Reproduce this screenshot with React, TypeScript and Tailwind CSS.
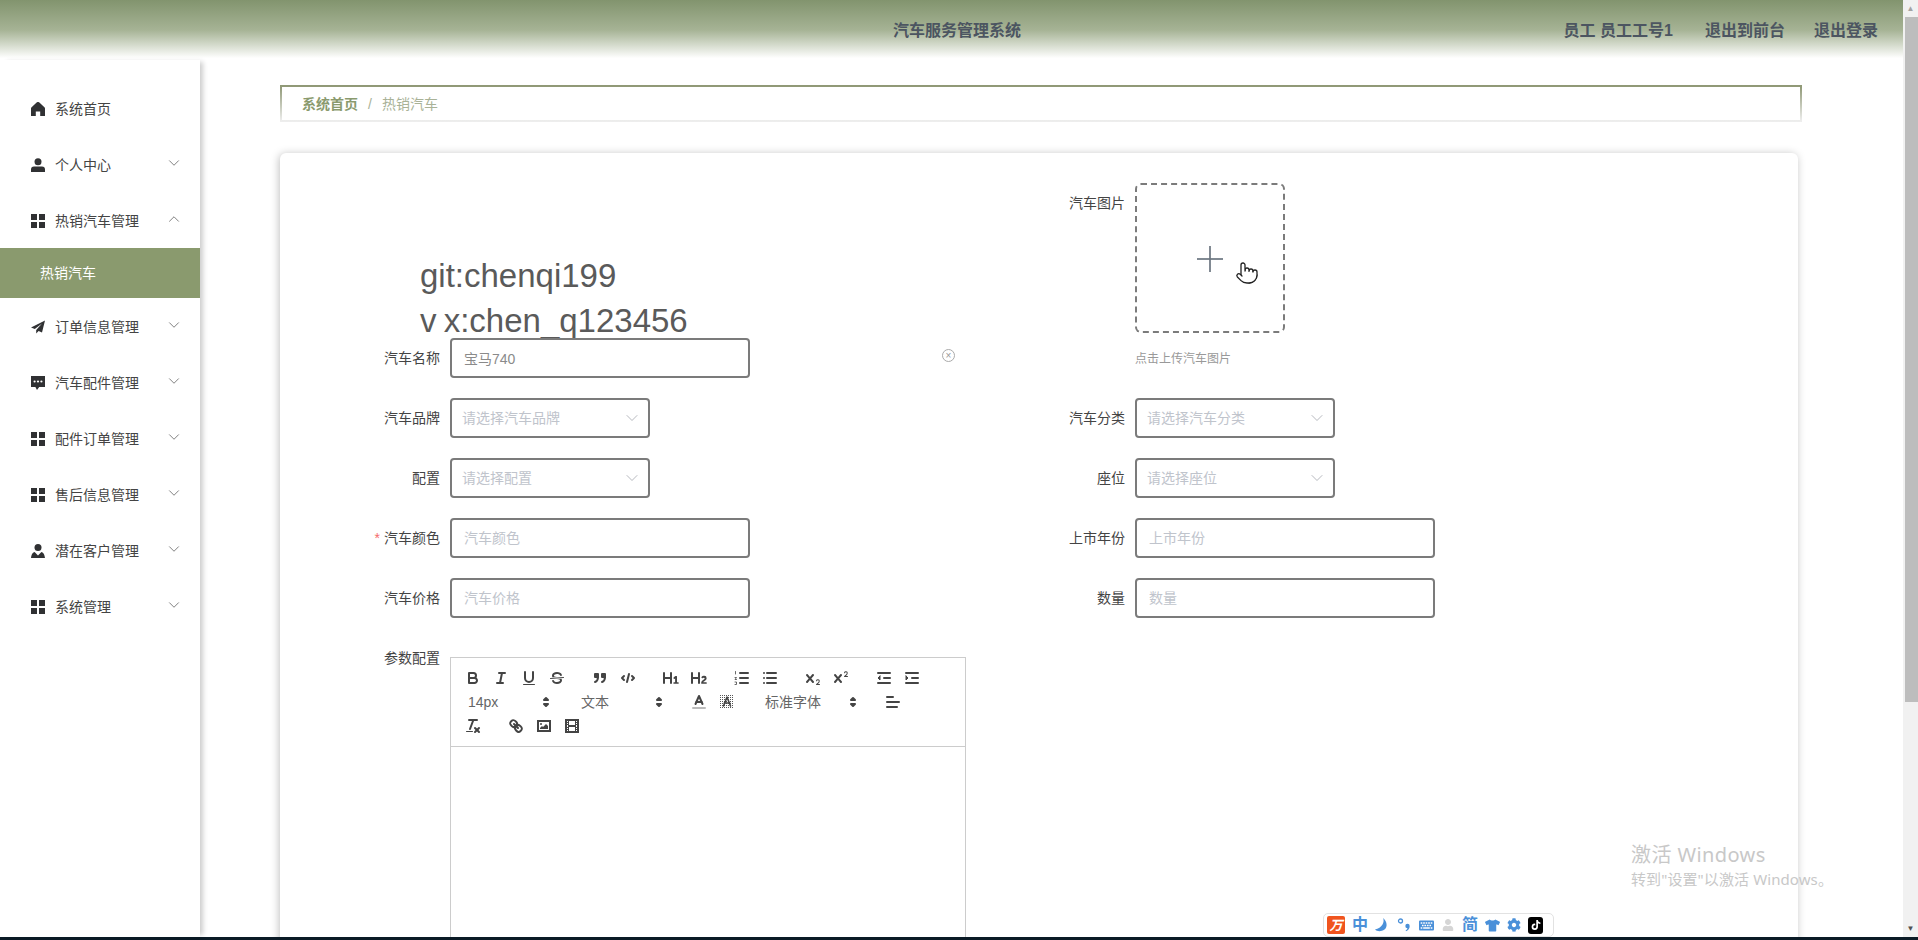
import type { ReactNode } from 'react';
import { ChevronDown, ChevronUp, Pointer } from 'lucide-react';
import { FaCog, FaKeyboard, FaTiktok, FaTshirt, FaUser } from 'react-icons/fa';

function HomeIcon() {
  return (
    <svg width="14" height="14" viewBox="0 0 14 14" fill="#303133">
      <path d="M5.6.6a2 2 0 0 1 2.8 0l5 4.6c.4.4.6.8.6 1.3V14H9.2V9.6H4.8V14H0V6.5c0-.5.2-.9.6-1.3z" />
    </svg>
  );
}

function UserIcon() {
  return (
    <svg width="14" height="14" viewBox="0 0 14 14" fill="#303133">
      <circle cx="7" cy="3.7" r="3.5" />
      <path d="M3 8.6h8a3 3 0 0 1 3 3V14H0v-2.4a3 3 0 0 1 3-3z" />
    </svg>
  );
}

function GridIcon() {
  return (
    <svg width="14" height="14" viewBox="0 0 14 14" fill="#303133">
      <rect x="0" y="0" width="6" height="6" />
      <rect x="8" y="0" width="6" height="6" />
      <rect x="0" y="8" width="6" height="6" />
      <rect x="8" y="8" width="6" height="6" />
    </svg>
  );
}

function PlaneIcon() {
  return (
    <svg width="14" height="14" viewBox="0 0 14 14" fill="#303133">
      <path d="M14 .5 0 7.500l3.800 1.600L11 3.600 5.200 10v3.600l2.400-2.700 3.400 1.500z" />
    </svg>
  );
}

function ChatIcon() {
  return (
    <svg width="14" height="14" viewBox="0 0 14 14">
      <path fill="#303133" d="M0 0h14v11H8.200L6 14l-1.600-3H0z" />
      <circle cx="3.600" cy="5.500" r="1.100" fill="#fff" />
      <circle cx="7" cy="5.500" r="1.100" fill="#fff" />
      <circle cx="10.400" cy="5.500" r="1.100" fill="#fff" />
    </svg>
  );
}

function CustomerIcon() {
  return (
    <svg width="14" height="14" viewBox="0 0 14 14" fill="#303133">
      <circle cx="7" cy="3.500" r="3.500" />
      <path d="M3.600 8 7 11.600 10.400 8c1.600.4 3 1.800 3.600 6H0c.6-4.200 2-5.600 3.600-6z" />
    </svg>
  );
}

const menu = [
  { name: '系统首页', icon: <HomeIcon /> },
  { name: '个人中心', icon: <UserIcon />, arrow: true },
  { name: '热销汽车管理', icon: <GridIcon />, open: true },
  { name: '订单信息管理', icon: <PlaneIcon />, arrow: true },
  { name: '汽车配件管理', icon: <ChatIcon />, arrow: true },
  { name: '配件订单管理', icon: <GridIcon />, arrow: true },
  { name: '售后信息管理', icon: <GridIcon />, arrow: true },
  { name: '潜在客户管理', icon: <CustomerIcon />, arrow: true },
  { name: '系统管理', icon: <GridIcon />, arrow: true },
];

function Sidebar() {
  return (
    <aside className="relative w-[200px] shrink-0 bg-white pt-[21px] text-[14px] text-[#444] shadow-[5px_0_5px_-2px_rgba(0,0,0,0.2)]">
      {menu.map((item) => (
        <div key={item.name}>
          <div className="flex h-[56px] items-center pl-[31px] pr-[17px]">
            {item.icon}
            <span className="ml-[10px]">{item.name}</span>
            {item.arrow && <ChevronDown size={18} strokeWidth={1.1} className="ml-auto -mt-[4px] text-[#666]" />}
            {item.open && <ChevronUp size={18} strokeWidth={1.1} className="ml-auto -mt-[4px] text-[#666]" />}
          </div>
          {item.open && (
            <div className="-mt-px mb-px flex h-[50px] items-center bg-[#8a9a6e] pl-[40px] text-white">热销汽车</div>
          )}
        </div>
      ))}
    </aside>
  );
}

function Label({ text, required }: { text: string; required?: boolean }) {
  return (
    <div className="w-[160px] shrink-0 text-right text-[14px] leading-[40px] text-[#444]">
      {required && <span className="mr-[4px] text-[#f56c6c]">*</span>}
      {text}
    </div>
  );
}

function Field({ label, required, children }: { label: string; required?: boolean; children: ReactNode }) {
  return (
    <div className="relative flex gap-[10px]">
      <Label text={label} required={required} />
      {children}
    </div>
  );
}

function TextInput({ placeholder, value }: { placeholder: string; value?: string }) {
  return (
    <input
      readOnly
      defaultValue={value}
      placeholder={placeholder}
      className="h-[40px] w-[300px] rounded-[4px] border-2 border-[#7b7b7b] bg-white px-[12px] text-[14px] text-[#8a8a8a] outline-none placeholder:text-[#c0c4cc]"
    />
  );
}

function SelectBox({ placeholder }: { placeholder: string }) {
  return (
    <div className="flex h-[40px] w-[200px] items-center justify-between rounded-[4px] border-2 border-[#7b7b7b] bg-white pl-[10px] pr-[6px] text-[14px] text-[#c0c4cc]">
      <span>{placeholder}</span>
      <ChevronDown size={20} strokeWidth={1} className="text-[#a8abb2]" />
    </div>
  );
}

function Btn({ children }: { children: ReactNode }) {
  return (
    <span className="flex h-[24px] w-[28px] items-center justify-center">
      <svg
        width="18"
        height="18"
        viewBox="0 0 18 18"
        fill="none"
        stroke="#444"
        strokeWidth="2"
        strokeLinecap="round"
        strokeLinejoin="round"
      >
        {children}
      </svg>
    </span>
  );
}

function Picker({ text, width }: { text: string; width: string }) {
  return (
    <span className={`flex h-[24px] items-center justify-between pl-[9px] pr-[2px] text-[14px] text-[#666] ${width}`}>
      <span>{text}</span>
      <svg width="18" height="18" viewBox="0 0 18 18" fill="#444" stroke="#444" strokeWidth="2" strokeLinejoin="round">
        <polygon points="7 11 9 13 11 11" />
        <polygon points="7 7 9 5 11 7" />
      </svg>
    </span>
  );
}

function Group({ children }: { children: ReactNode }) {
  return <span className="mr-[15px] flex">{children}</span>;
}

const xMark =
  'M9.65,5.241a1,1,0,0,0-1.409.108L6,7.964,3.759,5.349A1,1,0,0,0,2.241,6.649L4.684,9.5,2.241,12.35a1,1,0,0,0,1.518,1.3L6,11.036l2.241,2.614a1,1,0,1,0,1.518-1.3L7.316,9.5,9.759,6.651A1,1,0,0,0,9.65,5.241Z';

function Toolbar() {
  return (
    <div className="border-b border-[#ccc] p-[8px]">
      <div className="flex">
        <Group>
          <Btn>
            <path d="M5,4H9.5A2.5,2.5,0,0,1,12,6.5v0A2.5,2.5,0,0,1,9.5,9H5V4Z" />
            <path d="M5,9h5.5A2.5,2.5,0,0,1,13,11.5v0A2.5,2.5,0,0,1,10.5,14H5V9Z" />
          </Btn>
          <Btn>
            <line x1="7" x2="13" y1="4" y2="4" />
            <line x1="5" x2="11" y1="14" y2="14" />
            <line x1="8" x2="10" y1="14" y2="4" />
          </Btn>
          <Btn>
            <path d="M5,3V9a4,4,0,0,0,4,4H9a4,4,0,0,0,4-4V3" />
            <rect x="3" y="15" width="12" height="1" rx="0.5" fill="#444" stroke="none" />
          </Btn>
          <Btn>
            <line x1="15.5" x2="2.5" y1="8.5" y2="9.5" strokeWidth="1" />
            <path
              fill="#444"
              stroke="none"
              d="M9.007,8C6.542,7.791,6,7.519,6,6.5,6,5.792,7.283,5,9,5c1.571,0,2.765.679,2.969,1.309a1,1,0,0,0,1.9-.617C13.356,4.106,11.354,3,9,3,6.2,3,4,4.538,4,6.5a3.2,3.2,0,0,0,.5,1.843Z"
            />
            <path
              fill="#444"
              stroke="none"
              d="M8.984,10C11.457,10.208,12,10.479,12,11.5c0,.708-1.283,1.5-3,1.5-1.571,0-2.765-.679-2.969-1.309a1,1,0,1,0-1.9.617C4.644,13.894,6.646,15,9,15c2.8,0,5-1.538,5-3.5a3.2,3.2,0,0,0-.5-1.843Z"
            />
          </Btn>
        </Group>
        <Group>
          <Btn>
            <rect x="4" y="5" width="3" height="3" fill="#444" />
            <rect x="11" y="5" width="3" height="3" fill="#444" />
            <path d="M7,8c0,4.031-3,5-3,5" />
            <path d="M14,8c0,4.031-3,5-3,5" />
          </Btn>
          <Btn>
            <polyline points="5 7 3 9 5 11" />
            <polyline points="13 7 15 9 13 11" />
            <line x1="10" x2="8" y1="5" y2="13" />
          </Btn>
        </Group>
        <Group>
          <Btn>
            <path
              fill="#444"
              stroke="none"
              d="M10,4V14a1,1,0,0,1-2,0V10H3v4a1,1,0,0,1-2,0V4A1,1,0,0,1,3,4V8H8V4a1,1,0,0,1,2,0Zm6.06787,9.209H14.98975V7.59863a.54085.54085,0,0,0-.605-.60547h-.62744a1.01119,1.01119,0,0,0-.748.29688L11.645,8.56641a.5435.5435,0,0,0-.022.8584l.28613.30762a.53861.53861,0,0,0,.84717.0332l.09912-.08789a1.2137,1.2137,0,0,0,.2417-.35254h.02246s-.01123.30859-.01123.60547V13.209H12.041a.54085.54085,0,0,0-.605.60547v.43945a.54085.54085,0,0,0,.605.60547h4.02686a.54085.54085,0,0,0,.605-.60547v-.43945A.54085.54085,0,0,0,16.06787,13.209Z"
            />
          </Btn>
          <Btn>
            <path
              fill="#444"
              stroke="none"
              d="M16.73975,13.81445v.43945a.54085.54085,0,0,1-.605.60547H11.855a.58392.58392,0,0,1-.64893-.60547V14.0127c0-2.90527,3.39941-3.42187,3.39941-4.55469a.77675.77675,0,0,0-.84717-.78125,1.17684,1.17684,0,0,0-.83594.38477c-.2749.26367-.561.374-.85791.13184l-.4292-.34082c-.30811-.24219-.38525-.51758-.1543-.81445a2.97155,2.97155,0,0,1,2.45361-1.17676,2.45393,2.45393,0,0,1,2.68408,2.40918c0,2.45312-3.1792,2.92676-3.27832,3.93848h2.79443A.54085.54085,0,0,1,16.73975,13.81445ZM9,3A.99974.99974,0,0,0,8,4V8H3V4A1,1,0,0,0,1,4V14a1,1,0,0,0,2,0V10H8v4a1,1,0,0,0,2,0V4A.99974.99974,0,0,0,9,3Z"
            />
          </Btn>
        </Group>
        <Group>
          <Btn>
            <line x1="7" x2="15" y1="4" y2="4" />
            <line x1="7" x2="15" y1="9" y2="9" />
            <line x1="7" x2="15" y1="14" y2="14" />
            <path d="M2.5 2.500v2.500M2 8.500h1.500L2 10.500h1.500M2 13h1.500v2.500H2" strokeWidth="0.8" />
          </Btn>
          <Btn>
            <line x1="6" x2="15" y1="4" y2="4" />
            <line x1="6" x2="15" y1="9" y2="9" />
            <line x1="6" x2="15" y1="14" y2="14" />
            <line x1="3" x2="3" y1="4" y2="4" />
            <line x1="3" x2="3" y1="9" y2="9" />
            <line x1="3" x2="3" y1="14" y2="14" />
          </Btn>
        </Group>
        <Group>
          <Btn>
            <path
              fill="#444"
              stroke="none"
              d="M15.5,15H13.861a3.858,3.858,0,0,0,1.914-2.975,1.8,1.8,0,0,0-1.6-1.751A1.921,1.921,0,0,0,12.021,11.7a.5.5,0,1,0,.957.291.914.914,0,0,1,1.053-.725.81.81,0,0,1,.744.762c0,1.076-1.17,1.87-1.94,2.431A1.456,1.456,0,0,0,12,15.5a.5.5,0,0,0,.5.5h3a.5.5,0,0,0,0-1Z"
            />
            <path fill="#444" stroke="none" d={xMark} />
          </Btn>
          <Btn>
            <path
              fill="#444"
              stroke="none"
              d="M15.5,7H13.861a4.015,4.015,0,0,0,1.914-2.975,1.8,1.8,0,0,0-1.6-1.751A1.922,1.922,0,0,0,12.021,3.7a.5.5,0,1,0,.957.291.917.917,0,0,1,1.053-.725.81.81,0,0,1,.744.762c0,1.077-1.164,1.925-1.934,2.486A1.423,1.423,0,0,0,12,7.5a.5.5,0,0,0,.5.5h3a.5.5,0,0,0,0-1Z"
            />
            <path fill="#444" stroke="none" d={xMark} />
          </Btn>
        </Group>
        <Group>
          <Btn>
            <line x1="3" x2="15" y1="14" y2="14" />
            <line x1="3" x2="15" y1="4" y2="4" />
            <line x1="9" x2="15" y1="9" y2="9" />
            <polyline fill="#444" strokeWidth="1" points="5 7 5 11 3 9 5 7" />
          </Btn>
          <Btn>
            <line x1="3" x2="15" y1="14" y2="14" />
            <line x1="3" x2="15" y1="4" y2="4" />
            <line x1="9" x2="15" y1="9" y2="9" />
            <polyline fill="#444" strokeWidth="1" points="3 7 3 11 5 9 3 7" />
          </Btn>
        </Group>
      </div>
      <div className="flex">
        <span className="mr-[15px]">
          <Picker text="14px" width="w-[98px]" />
        </span>
        <span className="mr-[15px]">
          <Picker text="文本" width="w-[98px]" />
        </span>
        <Group>
          <Btn>
            <line x1="3" x2="15" y1="15" y2="15" stroke="#bbb" />
            <polyline points="5.5 11 9 3 12.5 11" />
            <line x1="11.63" x2="6.38" y1="9" y2="9" />
          </Btn>
          <Btn>
            <defs>
              <pattern id="dots" width="2" height="2" patternUnits="userSpaceOnUse">
                <rect width="1" height="1" fill="#555" stroke="none" />
              </pattern>
            </defs>
            <rect x="2" y="2" width="14" height="14" fill="url(#dots)" stroke="none" />
            <polyline points="5.5 13 9 4 12.5 13" strokeWidth="1.6" />
            <line x1="11.63" x2="6.38" y1="10" y2="10" strokeWidth="1.6" />
          </Btn>
        </Group>
        <span className="mr-[15px]">
          <Picker text="标准字体" width="w-[108px]" />
        </span>
        <Group>
          <Btn>
            <line x1="3" x2="15" y1="9" y2="9" />
            <line x1="3" x2="13" y1="14" y2="14" />
            <line x1="3" x2="9" y1="4" y2="4" />
          </Btn>
        </Group>
      </div>
      <div className="flex">
        <Group>
          <Btn>
            <line x1="5" x2="13" y1="3" y2="3" />
            <line x1="6" x2="9.35" y1="12" y2="3" />
            <line x1="11" x2="15" y1="11" y2="15" />
            <line x1="15" x2="11" y1="11" y2="15" />
            <rect x="2" y="14" width="7" height="1" rx="0.5" fill="#444" stroke="none" />
          </Btn>
        </Group>
        <Group>
          <Btn>
            <line x1="7" x2="11" y1="7" y2="11" />
            <path d="M8.9,4.577a3.476,3.476,0,0,1,.36,4.679A3.476,3.476,0,0,1,4.577,8.9C3.185,7.5,2.035,6.4,4.217,4.217S7.5,3.185,8.9,4.577Z" />
            <path d="M13.423,9.1a3.476,3.476,0,0,0-4.679-.36,3.476,3.476,0,0,0,.36,4.679c1.392,1.392,2.5,2.542,4.679.36S14.815,10.5,13.423,9.1Z" />
          </Btn>
          <Btn>
            <rect x="3" y="4" width="12" height="10" strokeLinejoin="miter" />
            <circle cx="6" cy="7" r="1" fill="#444" stroke="none" />
            <polyline fill="#444" stroke="none" points="5 12 5 11 7 9 8 10 11 7 13 9 13 12 5 12" />
          </Btn>
          <Btn>
            <rect x="3" y="3" width="12" height="12" strokeLinejoin="miter" />
            <rect x="5" y="3" width="1" height="12" fill="#444" stroke="none" />
            <rect x="12" y="3" width="1" height="12" fill="#444" stroke="none" />
            <rect x="5" y="8" width="8" height="2" fill="#444" stroke="none" />
            <rect x="3" y="5" width="3" height="1" fill="#444" stroke="none" />
            <rect x="3" y="7" width="3" height="1" fill="#444" stroke="none" />
            <rect x="3" y="10" width="3" height="1" fill="#444" stroke="none" />
            <rect x="3" y="12" width="3" height="1" fill="#444" stroke="none" />
            <rect x="12" y="5" width="3" height="1" fill="#444" stroke="none" />
            <rect x="12" y="7" width="3" height="1" fill="#444" stroke="none" />
            <rect x="12" y="10" width="3" height="1" fill="#444" stroke="none" />
            <rect x="12" y="12" width="3" height="1" fill="#444" stroke="none" />
          </Btn>
        </Group>
      </div>
    </div>
  );
}

function FormCard() {
  return (
    <div className="mt-[31px] mr-[4px] grid grid-cols-[685px_1fr] gap-y-[20px] rounded-[6px] bg-white pt-[30px] shadow-[-1px_1px_8px_rgba(0,0,0,0.25)]">
      <div>
        <div className="h-[155px] pl-[140px] pt-[70px] text-[33px] leading-[45px] whitespace-nowrap text-[#5a5a5a] [word-spacing:-2px]">
          <div>git:chenqi199</div>
          <div>v x:chen_q123456</div>
        </div>
        <Field label="汽车名称">
          <TextInput placeholder="汽车名称" value="宝马740" />
          <span className="ml-[182px] mt-[11px] flex h-[13px] w-[13px] items-center justify-center rounded-full border border-[#aaa] text-[10px] leading-none text-[#999]">
            ×
          </span>
        </Field>
      </div>
      <div className="flex gap-[10px]">
        <Label text="汽车图片" />
        <div>
          <div className="relative flex h-[150px] w-[150px] items-center justify-center rounded-[6px] border-2 border-dashed border-[#7b7b7b] pt-[2px]">
            <svg width="26" height="26" viewBox="0 0 26 26" stroke="#6b7580" strokeWidth="1.7">
              <line x1="13" x2="13" y1="0" y2="26" />
              <line x1="0" x2="26" y1="13" y2="13" />
            </svg>
            <Pointer size={24} strokeWidth={1.3} fill="#fff" className="absolute left-[98px] top-[76px] text-[#222]" />
          </div>
          <div className="mt-[18px] text-[12px] leading-[16px] text-[#999]">点击上传汽车图片</div>
        </div>
      </div>
      <Field label="汽车品牌">
        <SelectBox placeholder="请选择汽车品牌" />
      </Field>
      <Field label="汽车分类">
        <SelectBox placeholder="请选择汽车分类" />
      </Field>
      <Field label="配置">
        <SelectBox placeholder="请选择配置" />
      </Field>
      <Field label="座位">
        <SelectBox placeholder="请选择座位" />
      </Field>
      <Field label="汽车颜色" required>
        <TextInput placeholder="汽车颜色" />
      </Field>
      <Field label="上市年份">
        <TextInput placeholder="上市年份" />
      </Field>
      <Field label="汽车价格">
        <TextInput placeholder="汽车价格" />
      </Field>
      <Field label="数量">
        <TextInput placeholder="数量" />
      </Field>
      <div className="col-span-2">
        <Field label="参数配置">
          <div className="mt-[19px] h-[500px] w-[516px] border border-[#ccc]">
            <Toolbar />
          </div>
        </Field>
      </div>
    </div>
  );
}

function ImeBar() {
  const blue = 'text-[#4a90d9]';
  return (
    <div className="absolute left-[1323px] top-[913px] flex h-[24px] w-[231px] items-center rounded-[5px] border border-[#e2e2e2] bg-white pl-[3px]">
      <span className="flex h-[18px] w-[18px] items-center justify-center rounded-[2px] bg-[#f0541e] text-[13px] font-bold italic leading-none text-white">
        万
      </span>
      <span className={`ml-[4px] w-[22px] text-center text-[16px] font-bold leading-none ${blue}`}>中</span>
      <span className="flex w-[22px] justify-center">
        <svg width="14" height="14" viewBox="0 0 14 14" fill="#4a90d9">
          <path d="M8 0c2 4-1 10-8 11.500 2 2 6 2.500 9.500 0C13 9 12 3 8 0z" />
        </svg>
      </span>
      <span className="flex w-[22px] justify-center">
        <svg width="14" height="14" viewBox="0 0 14 14" fill="#4a90d9">
          <circle cx="3.500" cy="3" r="2" fill="none" stroke="#4a90d9" strokeWidth="1.300" />
          <circle cx="10.500" cy="8" r="2.200" />
          <path d="M12.500 8.500c0 2.500-1.500 4-3.500 4.700l-.4-.8c1.400-.8 2-1.800 1.800-3z" />
        </svg>
      </span>
      <span className={`flex w-[22px] justify-center ${blue}`}>
        <FaKeyboard size={15} />
      </span>
      <span className="flex w-[22px] justify-center text-[#d5d5d5]">
        <FaUser size={12} />
      </span>
      <span className={`w-[22px] text-center text-[16px] font-bold leading-none ${blue}`}>简</span>
      <span className={`flex w-[22px] justify-center ${blue}`}>
        <FaTshirt size={15} />
      </span>
      <span className={`flex w-[22px] justify-center ${blue}`}>
        <FaCog size={14} />
      </span>
      <span className="ml-[3px] flex h-[17px] w-[15px] items-center justify-center rounded-[3px] bg-black text-white">
        <FaTiktok size={10} />
      </span>
    </div>
  );
}

export default function App() {
  return (
    <div className="relative flex h-screen w-full flex-col overflow-hidden bg-white font-['Liberation_Sans','Noto_Sans_CJK_SC',sans-serif]">
      <div className="flex min-h-0 flex-1">
        <div className="flex min-w-0 flex-1 flex-col">
          <header className="flex h-[60px] shrink-0 items-center bg-gradient-to-b from-[#82946e] via-[#a6b395] to-white to-[97%] pr-[25px] pt-[2px] text-[16px] font-bold text-[#4c5561]">
            <span className="ml-[893px]">汽车服务管理系统</span>
            <span className="ml-auto">员工 员工工号1</span>
            <span className="ml-[32px]">退出到前台</span>
            <span className="ml-[29px]">退出登录</span>
          </header>
          <div className="flex min-h-0 flex-1">
            <Sidebar />
            <main className="min-w-0 flex-1 overflow-hidden pl-[80px] pr-[101px] pt-[25px]">
              <div className="flex h-[37px] items-center border-2 pl-[20px] pt-[1px] text-[14px] [border-image:linear-gradient(#8f9875,#eeeeee)_1]">
                <span className="font-bold text-[#8a9a6e]">系统首页</span>
                <span className="mx-[10px] text-[#a9b297]">/</span>
                <span className="text-[#a9b297]">热销汽车</span>
              </div>
              <FormCard />
            </main>
          </div>
        </div>
        <div className="flex w-[15px] shrink-0 flex-col bg-[#f1f1f1]">
          <div className="flex h-[17px] items-center justify-center text-[8px] leading-none text-[#a3a3a3]">▲</div>
          <div className="ml-[2px] h-[685px] bg-[#bdbdbd]" />
          <div className="mt-auto flex h-[17px] items-center justify-center text-[8px] leading-none text-[#505050]">▼</div>
        </div>
      </div>
      <div className="h-[3px] shrink-0 bg-[#0b1b26]" />
      <div className="absolute left-[1631px] top-[842px] font-['Noto_Sans','Noto_Sans_CJK_SC',sans-serif] text-[20px] leading-[26px] tracking-[0.4px] text-[#c8c8c8]">
        激活 Windows
      </div>
      <div className="absolute left-[1631px] top-[869px] font-['Noto_Sans','Noto_Sans_CJK_SC',sans-serif] text-[15px] leading-[20px] tracking-[0.1px] text-[#c8c8c8]">
        转到"设置"以激活 Windows。
      </div>
      <ImeBar />
    </div>
  );
}
